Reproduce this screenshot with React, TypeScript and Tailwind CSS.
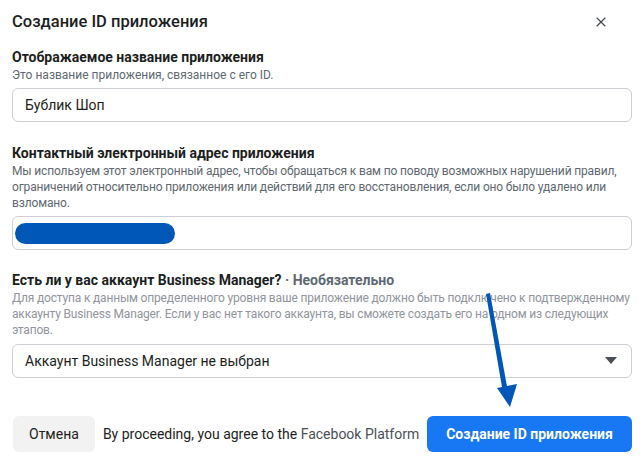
import { X } from "lucide-react";

const font = { fontFamily: "Roboto, 'Liberation Sans', sans-serif" };

function Field({ value, children }: { value?: string; children?: React.ReactNode }) {
	return (
		<div className="flex h-[34px] items-center rounded-md border border-[#ccd0d5] bg-white px-3 text-sm text-[#1c1e21]">
			{value}
			{children}
		</div>
	);
}

export default function App() {
	return (
		<div className="relative h-[458px] w-[644px] overflow-hidden bg-white px-3" style={font}>
			<div className="flex h-[44px] items-center justify-between">
				<h1 className="text-[16.5px] font-medium text-[#1c1e21]">Создание ID приложения</h1>
				<button type="button" className="mr-[23px] text-[#444950]">
					<X className="h-[16px] w-[16px]" strokeWidth={1.75} />
				</button>
			</div>

			<div className="mt-[4px] text-sm font-bold leading-[18px] text-[#1c1e21]">
				Отображаемое название приложения
			</div>
			<div className="mt-px text-xs leading-4 text-[#606770]">Это название приложения, связанное с его ID.</div>
			<div className="mt-[5px]">
				<Field value="Бублик Шоп" />
			</div>

			<div className="mt-[22px] text-sm font-bold leading-[18px] text-[#1c1e21]">
				Контактный электронный адрес приложения
			</div>
			<div className="mt-px text-xs leading-4 tracking-[-0.15px] text-[#606770]">
				Мы используем этот электронный адрес, чтобы обращаться к вам по поводу возможных нарушений правил,
				ограничений относительно приложения или действий для его восстановления, если оно было удалено или
				взломано.
			</div>
			<div className="mt-[5px]">
				<Field>
					<div className="-ml-[10px] h-[21px] w-[160px] rounded-full bg-[#0057b8]" />
				</Field>
			</div>

			<div className="mt-[21px] text-sm font-bold leading-[18px] text-[#1c1e21]">
				Есть ли у вас аккаунт Business Manager? <span className="text-[#606770]">· Необязательно</span>
			</div>
			<div className="mt-px text-xs leading-4 tracking-[-0.17px] text-[#90949c]">
				Для доступа к данным определенного уровня ваше приложение должно быть подключено к подтвержденному
				аккаунту Business Manager. Если у вас нет такого аккаунта, вы сможете создать его на одном из следующих
				этапов.
			</div>
			<div className="mt-[6px]">
				<Field>
					<span className="flex-1">Аккаунт Business Manager не выбран</span>
					<svg width="12" height="8" viewBox="0 0 12 8" className="mr-[2px]">
						<path d="M0 0h12L6 7z" fill="#4b4f56" />
					</svg>
				</Field>
			</div>

			<div className="mt-[38px] flex items-center">
				<button
					type="button"
					className="ml-px h-[36px] rounded-md bg-[#f2f2f2] px-[16px] text-sm text-[#1c1e21]"
				>
					Отмена
				</button>
				<span className="ml-[8px] text-sm text-[#1c1e21]">
					By proceeding, you agree to the <span className="text-[#4b4f56]">Facebook Platform</span>
				</span>
				<button
					type="button"
					className="ml-auto h-[36px] w-[205px] rounded-md bg-[#1877f2] text-sm font-bold text-white"
				>
					Создание ID приложения
				</button>
			</div>

			<svg className="pointer-events-none absolute left-0 top-0" width="644" height="458" viewBox="0 0 644 458">
				<polygon points="486,294 490,293 508,392 503,393" fill="#0057b8" />
				<polygon points="497,388 517,384 510,407" fill="#0057b8" />
			</svg>
		</div>
	);
}
